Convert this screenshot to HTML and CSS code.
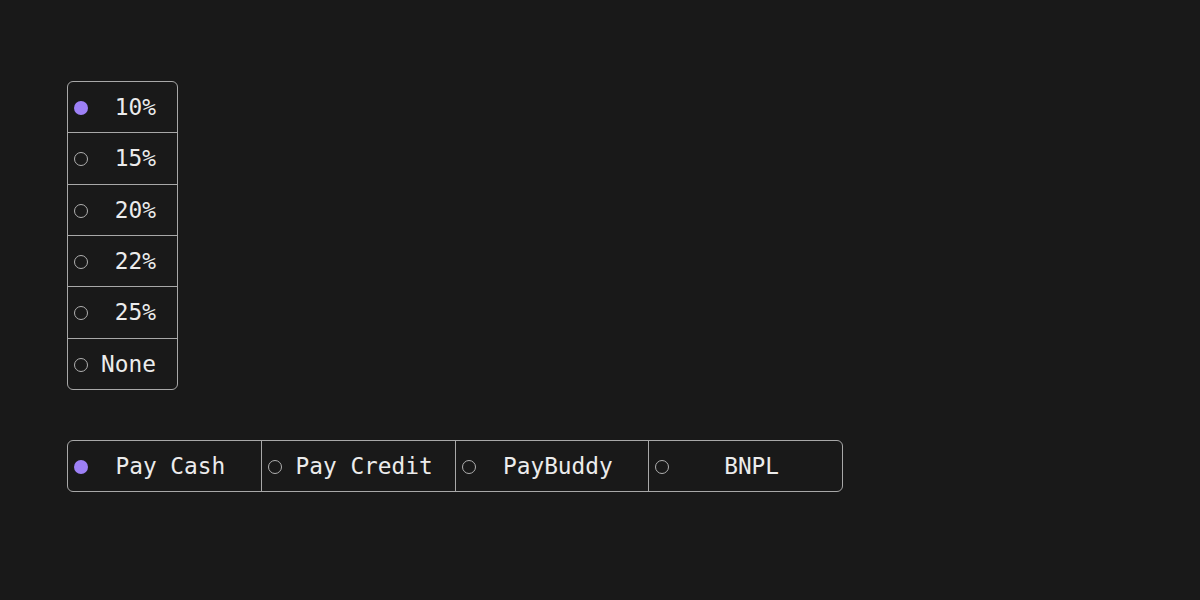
FILE: index.html
```html
<!DOCTYPE html>
<html>
<head>
<meta charset="utf-8">
<link rel="stylesheet" href="styles.css">
</head>
<body>
<div class="page">
  <div class="group vertical">
    <div class="opt"><span class="radio checked"></span><span class="label"> 10%</span></div>
    <div class="opt"><span class="radio"></span><span class="label"> 15%</span></div>
    <div class="opt"><span class="radio"></span><span class="label"> 20%</span></div>
    <div class="opt"><span class="radio"></span><span class="label"> 22%</span></div>
    <div class="opt"><span class="radio"></span><span class="label"> 25%</span></div>
    <div class="opt"><span class="radio"></span><span class="label">None</span></div>
  </div>
  <div class="group horizontal">
    <div class="opt"><span class="radio checked"></span><span class="label">Pay Cash</span></div>
    <div class="opt"><span class="radio"></span><span class="label">Pay Credit</span></div>
    <div class="opt"><span class="radio"></span><span class="label">PayBuddy</span></div>
    <div class="opt"><span class="radio"></span><span class="label">BNPL</span></div>
  </div>
</div>
</body>
</html>
```
FILE: styles.css
```css
html, body {
  margin: 0;
  padding: 0;
  background: #191919;
}
.page {
  width: 1200px;
  height: 600px;
  box-sizing: border-box;
  padding: 81px 0 0 67px;
  display: flex;
  flex-direction: column;
  align-items: flex-start;
  gap: 50px;
  font-family: "DejaVu Sans Mono", monospace;
  font-size: 22.8px;
  color: #ececec;
}
.group {
  display: flex;
  border: 1px solid #a8a8a8;
  border-radius: 6px;
  box-sizing: border-box;
}
.vertical {
  flex-direction: column;
  width: 111px;
  height: 309px;
}
.vertical .opt {
  flex: 1;
}
.vertical .opt + .opt {
  border-top: 1px solid #a8a8a8;
}
.horizontal {
  width: 776px;
  height: 52px;
}
.horizontal .opt {
  flex: 1;
}
.horizontal .opt + .opt {
  border-left: 1px solid #a8a8a8;
}
.opt {
  display: flex;
  align-items: center;
  padding: 0 8px 0 6px;
  box-sizing: border-box;
}
.radio {
  flex: none;
  width: 14px;
  height: 14px;
  margin-top: 2px;
  box-sizing: border-box;
  border: 1.8px solid #b0b0b0;
  border-radius: 50%;
}
.radio.checked {
  border: none;
  background: #9d80f6;
}
.label {
  flex: 1;
  text-align: center;
  white-space: pre;
}
```
